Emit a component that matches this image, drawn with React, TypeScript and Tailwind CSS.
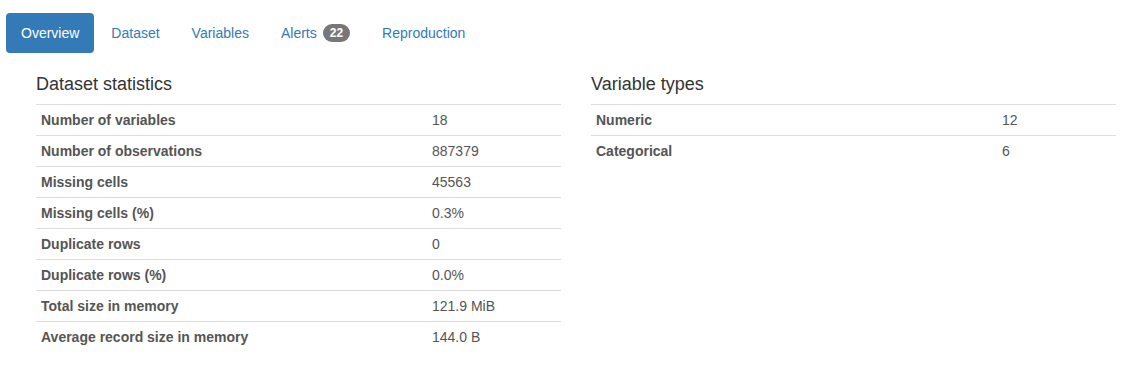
import React from "react";

const left: [string, string][] = [
  ["Number of variables", "18"],
  ["Number of observations", "887379"],
  ["Missing cells", "45563"],
  ["Missing cells (%)", "0.3%"],
  ["Duplicate rows", "0"],
  ["Duplicate rows (%)", "0.0%"],
  ["Total size in memory", "121.9 MiB"],
  ["Average record size in memory", "144.0 B"],
];

const right: [string, string][] = [
  ["Numeric", "12"],
  ["Categorical", "6"],
];

function StatTable({ title, rows, labelW }: { title: string; rows: [string, string][]; labelW: string }) {
  return (
    <div className="w-[525px]">
      <h4 className="text-[18px] leading-[20px] text-[#333] font-medium pt-[2px] pb-[10px] pl-0">{title}</h4>
      <div className="border-t border-[#ddd]">
        {rows.map(([k, v], i) => (
          <div
            key={k}
            className={`flex text-[14px] leading-[20px] text-[#555] ${i < rows.length - 1 ? "border-b border-[#ddd]" : ""}`}
          >
            <div className={`${labelW} px-[5px] py-[5px] font-bold`}>{k}</div>
            <div className="flex-1 px-[5px] py-[5px]">{v}</div>
          </div>
        ))}
      </div>
    </div>
  );
}

export default function App() {
  return (
    <div className="w-[1136px] h-[368px] bg-white" style={{ fontFamily: '"Liberation Sans", Arial, sans-serif' }}>
      <div className="flex pl-[6px] pt-[13px] text-[14px] leading-[20px]">
        <div className="px-[15px] py-[10px] rounded-[4px] bg-[#337ab7] text-white">Overview</div>
        <div className="ml-[2px] px-[15px] py-[10px] text-[#337ab7]">Dataset</div>
        <div className="ml-[2px] px-[15px] py-[10px] text-[#337ab7]">Variables</div>
        <div className="ml-[2px] px-[15px] py-[10px] text-[#337ab7] flex items-center">
          Alerts
          <span className="ml-[6px] inline-block rounded-[10px] bg-[#777] text-white text-[12px] font-bold leading-[12px] px-[7px] py-[3px]">22</span>
        </div>
        <div className="ml-[2px] px-[15px] py-[10px] text-[#337ab7]">Reproduction</div>
      </div>
      <div className="flex pl-[36px] gap-[30px] mt-[19px]">
        <StatTable title="Dataset statistics" rows={left} labelW="w-[391px]" />
        <StatTable title="Variable types" rows={right} labelW="w-[406px]" />
      </div>
    </div>
  );
}
